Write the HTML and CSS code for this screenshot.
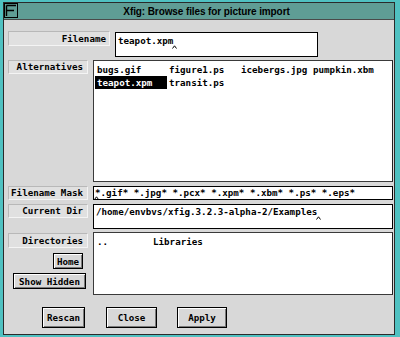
FILE: index.html
```html
<!DOCTYPE html>
<html lang="en">
  <head>
    <meta charset="UTF-8">
    <title>Xfig: Browse files for picture import</title>
    <link rel="stylesheet" href="styles.css">
  </head>
  <body>
    <div class="frame">
      <div class="titlebar">
        <span class="menu-btn">
          <svg width="14" height="15" viewBox="0 0 14 15">
            <rect x="0.5" y="0.5" width="13" height="14" fill="#5f9d95" stroke="#000"/>
            <path d="M2.5 2.5 V13 M2.5 2.5 H12 M2.5 7.5 H10" stroke="#000" stroke-width="1.4" fill="none"/>
          </svg>
        </span>
        <span class="title">Xfig: Browse files for picture import</span>
      </div>

      <div class="dialog">
        <div class="row row-name">
          <div class="label label-wide">Filename</div>
          <div class="field field-name">teapot.xpm<svg class="caret" width="5" height="4" viewBox="0 0 5 4"><path d="M0.5 3.5 L2.5 0.8 L4.5 3.5" stroke="#000" fill="none"/></svg></div>
        </div>

        <div class="row row-alt">
          <div class="label">Alternatives</div>
          <div class="list list-files">
            <span>bugs.gif</span>
            <span>figure1.ps</span>
            <span>icebergs.jpg</span>
            <span>pumpkin.xbm</span>
            <span class="selected">teapot.xpm</span>
            <span>transit.ps</span>
          </div>
        </div>

        <div class="row row-mask">
          <div class="label">Filename Mask</div>
          <div class="field field-mask"><svg class="caret caret-start" width="5" height="4" viewBox="0 0 5 4"><path d="M0.5 3.5 L2.5 0.8 L4.5 3.5" stroke="#000" fill="none"/></svg>*.gif* *.jpg* *.pcx* *.xpm* *.xbm* *.ps* *.eps*</div>
        </div>

        <div class="row row-dir">
          <div class="label">Current Dir</div>
          <div class="field field-dir">/home/envbvs/xfig.3.2.3-alpha-2/Examples<svg class="caret" width="5" height="4" viewBox="0 0 5 4"><path d="M0.5 3.5 L2.5 0.8 L4.5 3.5" stroke="#000" fill="none"/></svg></div>
        </div>

        <div class="row row-dirs">
          <div class="dirs-side">
            <div class="label">Directories</div>
            <button class="btn btn-home">Home</button>
            <button class="btn btn-hidden">Show Hidden</button>
          </div>
          <div class="list list-dirs">
            <span>..</span>
            <span>Libraries</span>
          </div>
        </div>

        <div class="row actions">
          <button class="btn btn-rescan">Rescan</button>
          <button class="btn btn-close">Close</button>
          <button class="btn btn-apply">Apply</button>
        </div>
      </div>
    </div>
  </body>
</html>
```

FILE: styles.css
```css
* {
  box-sizing: border-box;
  margin: 0;
  padding: 0;
}

body {
  width: 400px;
  height: 337px;
  overflow: hidden;
  background: #4fc1c1;
  font-family: "DejaVu Sans Mono", monospace;
  font-weight: bold;
  font-size: 9.2px;
  color: #000;
}

.frame {
  margin: 2px 0 0 3px;
  width: 392px;
  height: 333px;
  border: 1px solid #2a2a2a;
  background: #d8d8d8;
  display: flex;
  flex-direction: column;
}

.titlebar {
  height: 17px;
  display: flex;
  align-items: center;
  background: #5f9d95;
  border-bottom: 1px solid #4a4a4a;
}

.menu-btn {
  display: flex;
  width: 15px;
  height: 16px;
  align-items: flex-start;
}

.title {
  flex: 1;
  text-align: center;
  font-family: "Liberation Sans", Arial, sans-serif;
  font-size: 10px;
  font-weight: bold;
  letter-spacing: -0.1px;
}

.dialog {
  flex: 1;
  padding: 11px 1px 0 4px;
  display: flex;
  flex-direction: column;
}

.row {
  display: flex;
  align-items: flex-start;
}

.label {
  width: 80px;
  height: 14px;
  line-height: 12px;
  text-align: right;
  padding-right: 4px;
  background: #e0e0e0;
  border: 1px solid;
  border-color: #b8b8b8 #f4f4f4 #f4f4f4 #b8b8b8;
  white-space: nowrap;
}

.label-wide {
  width: 102px;
  height: 15px;
  line-height: 13px;
  padding-right: 3px;
}

.field {
  background: #fff;
  border: 1px solid #000;
  margin-left: 5px;
  padding: 2px 0 0 2px;
  line-height: 10px;
  white-space: nowrap;
  overflow: hidden;
}

.field-name {
  width: 203px;
  height: 25px;
  margin-top: 1px;
  padding-top: 3px;
}

.field-mask {
  flex: 1;
  height: 14px;
  padding: 1px 0 0 1px;
}

.field-dir {
  flex: 1;
  height: 25px;
}

.caret {
  vertical-align: -5px;
  margin-left: -1px;
}

.caret-start {
  vertical-align: -4px;
  margin-left: -1px;
  margin-right: -4px;
}

.row-alt {
  margin-top: 3px;
}

.row-mask,
.row-dir {
  margin-top: 4px;
}

.row-dirs {
  margin-top: 3px;
}

.list {
  flex: 1;
  margin-left: 5px;
  background: #fff;
  border: 1px solid #3a3a3a;
  border-right-color: #222;
  padding: 2px 0 0 1px;
  display: grid;
  align-content: start;
  grid-auto-rows: 13px;
  line-height: 13px;
}

.list span {
  padding-left: 2px;
  white-space: nowrap;
}

.list-files {
  height: 122px;
  grid-template-columns: repeat(4, 72px);
}

.list-files .selected {
  background: #000;
  color: #fff;
}

.list-dirs {
  height: 63px;
  grid-template-columns: 56px auto;
}

.dirs-side {
  width: 80px;
  display: flex;
  flex-direction: column;
  align-items: flex-end;
}

.dirs-side .label {
  margin-top: 1px;
  height: 15px;
  line-height: 13px;
}

.btn {
  font: inherit;
  background: #d8d8d8;
  border: 1px solid #000;
  box-shadow: inset 1px 1px 0 #fff, inset -1px -1px 0 #7a7a7a;
  text-align: center;
  white-space: nowrap;
}

.btn-home {
  width: 30px;
  height: 16px;
  margin-top: 5px;
  margin-right: 5px;
}

.btn-hidden {
  width: 73px;
  height: 16px;
  margin-top: 4px;
  margin-right: 2px;
}

.actions {
  margin-top: 12px;
  padding-left: 34px;
  gap: 21px;
}

.actions .btn {
  height: 21px;
}

.btn-rescan {
  width: 43px;
}

.btn-close {
  width: 51px;
}

.btn-apply {
  width: 50px;
  margin-left: -1px;
}
```
